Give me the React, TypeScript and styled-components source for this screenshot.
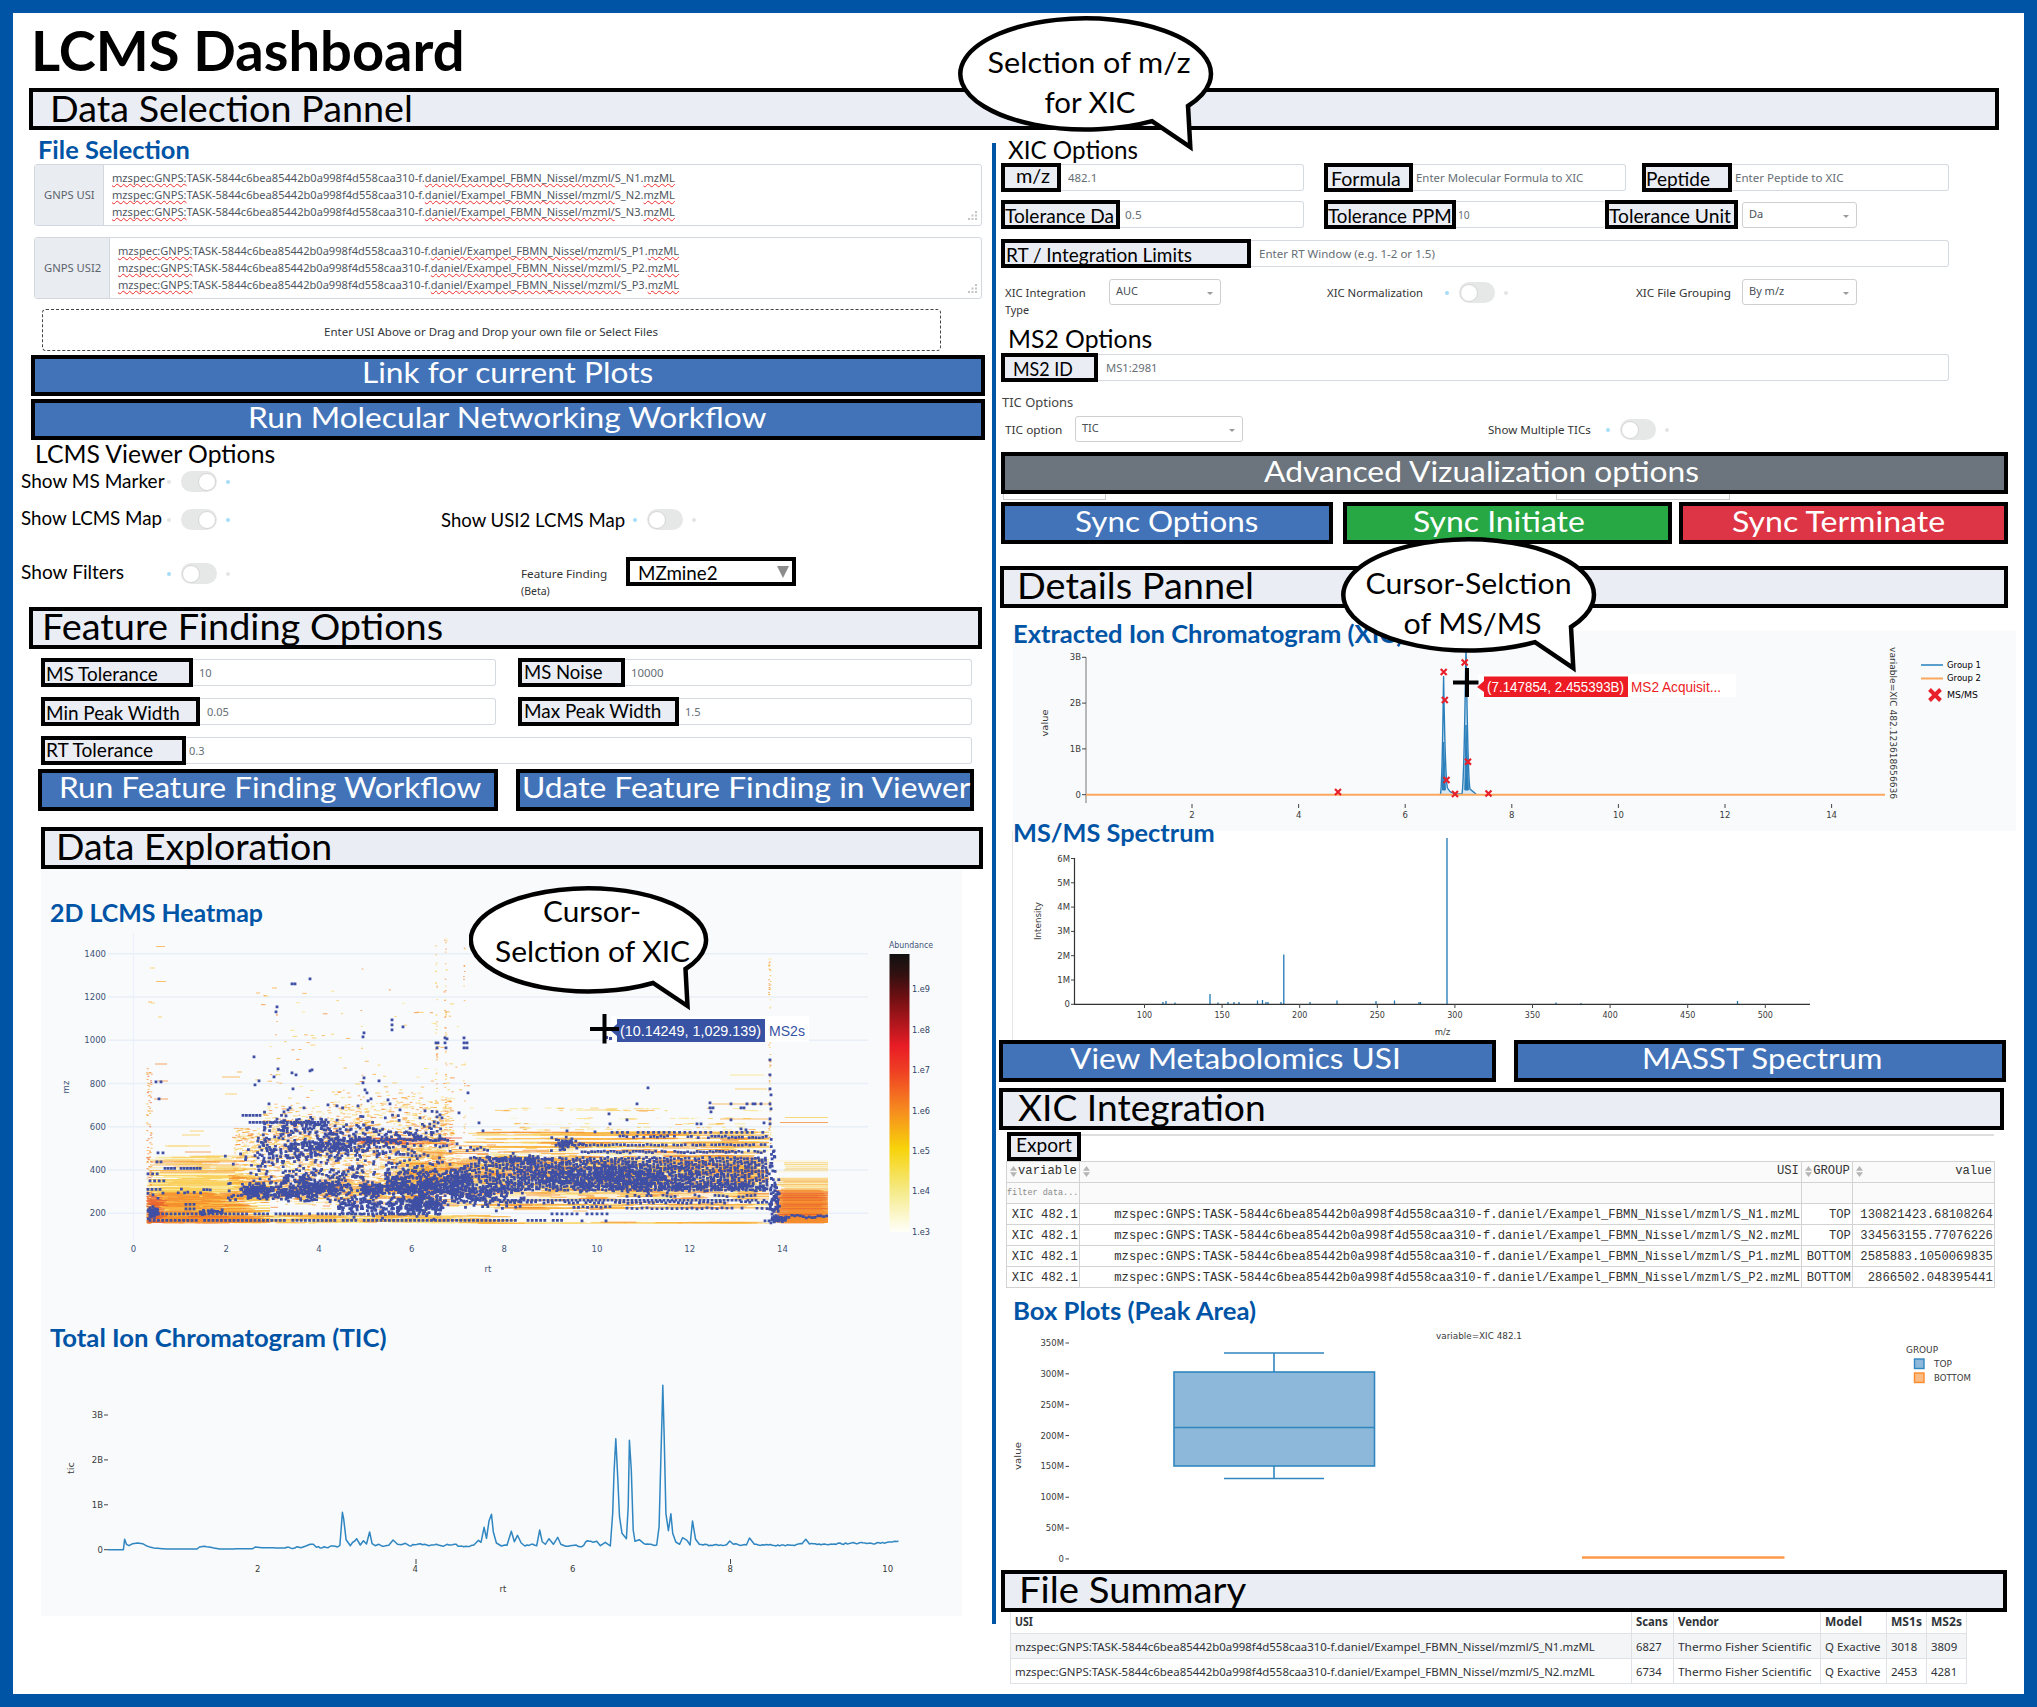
import React, { useLayoutEffect, useRef, useState } from 'react';
import styled, { createGlobalStyle, css } from 'styled-components';

const HUMAN = "Lato, 'Open Sans', sans-serif";
const UI = "'Noto Sans', 'Open Sans', sans-serif";
const PLOT = "'DejaVu Sans', 'Open Sans', sans-serif";
const BLUE = '#0054a6';
const BUTTON = '#4273b9';
const STEEL = '#1f77b4';

const Global = createGlobalStyle`
  *, *::before, *::after { box-sizing: border-box; }
  body { margin: 0; background: #fff; }
`;

/* ---------- layout ---------- */
const Frame = styled.div`
  position: relative;
  width: 2037px;
  height: 1707px;
  border: 13px solid ${BLUE};
  background: #fff;
  overflow: hidden;
  color: #000;
`;
const Body = styled.div`
  display: flex;
  align-items: flex-start;
`;
const Column = styled.div<{ $w: number }>`
  width: ${p => p.$w}px;
  flex: none;
`;
const Divider = styled.div`
  flex: none;
  width: 4px;
  height: 1481px;
  margin-top: 13px;
  background: ${BLUE};
`;
const Row = styled.div<{ $h: number }>`
  display: flex;
  align-items: flex-start;
  height: ${p => p.$h}px;
`;

/* ---------- text ---------- */
type Face = { $size: number; $bold?: boolean; $color?: string; $font?: string };
const Slot = styled.span<Face & { $w: number; $ml: number; $base: number }>`
  flex: none;
  display: block;
  width: ${p => p.$w}px;
  margin-left: ${p => p.$ml}px;
  margin-top: ${p => p.$base - 0.887 * p.$size}px;
  font: ${p => (p.$bold ? 700 : 400)} ${p => p.$size}px/1 ${p => p.$font || HUMAN};
  color: ${p => p.$color || 'inherit'};
  text-align: left;
  white-space: pre;
`;
const Glyphs = styled.span<{ $flush: boolean }>`
  display: inline-block;
  margin-left: ${p => (p.$flush ? '0' : '-0.055em')};
  transform-origin: 0 50%;
`;

type FitProps = {
  w: number; size: number; base: number; ml?: number; bold?: boolean;
  color?: string; font?: string; children: React.ReactNode;
};
/* Condenses or widens its text so that it fills the given width. */
function Fit({ w, size, base, ml = 0, bold, color, font, children }: FitProps) {
  const ref = useRef<HTMLSpanElement>(null);
  const [ratio, setRatio] = useState(1);
  useLayoutEffect(() => {
    const el = ref.current;
    if (el && el.offsetWidth) setRatio((w + size * 0.1) / el.offsetWidth);
  }, [w, size]);
  return (
    <Slot $w={w} $ml={ml} $base={base} $size={size} $bold={bold} $color={color} $font={font}>
      <Glyphs ref={ref} $flush={font === UI} style={{ transform: `scaleX(${ratio})` }}>{children}</Glyphs>
    </Slot>
  );
}

/* ---------- bars and buttons ---------- */
const Box = styled.div<{ $w: number; $ml?: number; $h?: number; $bg?: string }>`
  flex: none;
  display: flex;
  align-items: flex-start;
  width: ${p => p.$w}px;
  height: ${p => p.$h ?? 42}px;
  margin-left: ${p => p.$ml ?? 0}px;
  border: 4px solid #000;
  background: ${p => p.$bg || '#eaedf3'};
`;
const ActionBox = styled(Box)`
  color: #fff;
  padding: 0;
  cursor: pointer;
`;
type ActionProps = { w: number; ml: number; tx: number; tw: number; base?: number; h?: number; bg?: string; children: string };
const Action = ({ w, ml, tx, tw, base = 25, h = 42, bg = BUTTON, children }: ActionProps) => (
  <ActionBox as="button" $w={w} $ml={ml} $h={h} $bg={bg}>
    <Fit w={tw} ml={tx - 4} size={29.5} base={base}>{children}</Fit>
  </ActionBox>
);
const HeadBox = styled(Box)`
  font-weight: 400;
`;

/* ---------- form controls ---------- */
const Group = styled.div<{ $w: number; $ml: number }>`
  flex: none;
  display: flex;
  width: ${p => p.$w}px;
  height: 29px;
  margin-left: ${p => p.$ml}px;
`;
const Tag = styled.label<{ $w: number; $ml?: number }>`
  flex: none;
  display: flex;
  align-items: flex-start;
  width: ${p => p.$w}px;
  height: 29px;
  margin-left: ${p => p.$ml ?? 0}px;
  border: 4px solid #000;
  background: #eaedf3;
`;
const Field = styled.div<{ $open?: boolean }>`
  flex: 1;
  display: flex;
  align-items: center;
  height: 27px;
  margin-top: 1px;
  border: 1.5px solid #d5dae1;
  border-left: 0;
  border-right-width: ${p => (p.$open ? 0 : 1.5)}px;
  border-radius: 0 3px 3px 0;
`;
const inputFont = css`
  font: 11px/1 ${UI};
  color: #6c757d;
`;
const FieldText = styled.span`
  display: flex;
  height: 16px;
`;
type TaggedProps = {
  w: number; ml: number; tag: number; label: string; tx: number; tw: number; base?: number;
  value: string; vx: number; vw: number; open?: boolean;
};
const Tagged = (p: TaggedProps) => (
  <Group $w={p.w} $ml={p.ml}>
    <Tag $w={p.tag}><Fit w={p.tw} ml={p.tx - 4} size={18.8} base={(p.base ?? 22.5) - 2.9}>{p.label}</Fit></Tag>
    <Field $open={p.open}>
      <FieldText><Fit w={p.vw} ml={p.vx - p.tag} size={11} base={11.8} font={UI} color="#666e76">{p.value}</Fit></FieldText>
    </Field>
  </Group>
);
const SelectBox = styled.div<{ $w: number; $ml: number; $mt?: number; $h?: number }>`
  flex: none;
  display: flex;
  justify-content: space-between;
  align-items: center;
  width: ${p => p.$w}px;
  height: ${p => p.$h ?? 26}px;
  margin: ${p => p.$mt ?? 0}px 0 0 ${p => p.$ml}px;
  padding: 0 7px 3px 6px;
  border: 1.5px solid #cfcfcf;
  border-radius: 3px;
  ${inputFont}
  color: #495057;
`;
const Caret = styled.i`
  border: 3px solid transparent;
  border-top: 3px solid #999;
  border-bottom: 0;
  margin-top: 5px;
`;
const EngineSelect = styled.div`
  flex: none;
  display: flex;
  align-items: flex-start;
  width: 170px;
  height: 29px;
  margin: 1px 0 0 20px;
  border: 4px solid #000;
  background: #fff;
`;
const CaretSlot = styled.span`
  margin: 3px 0 0 60px;
`;
const ToggleRow = styled.div<{ $ml: number; $mt: number }>`
  flex: none;
  display: flex;
  align-items: center;
  justify-content: space-between;
  width: 63px;
  height: 21px;
  margin: ${p => p.$mt}px 0 0 ${p => p.$ml}px;
`;
const Dot = styled.i<{ $on: boolean }>`
  width: 4px;
  height: 4px;
  border-radius: 50%;
  background: ${p => (p.$on ? '#a5dcf7' : '#e3e4e4')};
`;
const Pill = styled.span<{ $on: boolean }>`
  display: flex;
  justify-content: ${p => (p.$on ? 'flex-end' : 'flex-start')};
  align-items: center;
  width: 36px;
  height: 21px;
  padding: 1px;
  border-radius: 11px;
  background: #e6e7e7;
  &::after {
    content: '';
    width: 18px;
    height: 18px;
    border-radius: 50%;
    background: #fff;
    border: 1px solid #d6d6d6;
  }
`;
const Toggle = ({ on = false, ml, mt }: { on?: boolean; ml: number; mt: number }) => (
  <ToggleRow $ml={ml} $mt={mt}><Dot $on={!on} /><Pill $on={on} /><Dot $on={on} /></ToggleRow>
);
const Stack = styled.div<{ $w: number; $ml: number }>`
  flex: none;
  width: ${p => p.$w}px;
  margin-left: ${p => p.$ml}px;
`;

/* ---------- USI inputs ---------- */
const UsiBox = styled.div`
  display: flex;
  flex: none;
  width: 948px;
  height: 62px;
  margin-left: 21px;
  border: 1.5px solid #d3d8e0;
  border-radius: 3px;
`;
const UsiTag = styled.div<{ $w: number }>`
  display: flex;
  align-items: flex-start;
  flex: none;
  width: ${p => p.$w}px;
  background: #e9ecf1;
  border-right: 1.5px solid #d3d8e0;
`;
const UsiLines = styled.div`
  flex: 1;
  padding-top: 5px;
`;
const UsiLine = styled.div`
  display: flex;
  height: 16.7px;
`;
const Wavy = styled.span`
  text-decoration: underline wavy #ee2a2a 1px;
  text-decoration-skip-ink: none;
  text-underline-offset: 1px;
`;
const Grip = styled.svg`
  align-self: flex-end;
  margin: 0 3px 4px 0;
`;
const UsiInput = ({ label, tag, lw, tw, lines }: { label: string; tag: number; lw: number; tw: number; lines: string[] }) => (
  <UsiBox>
    <UsiTag $w={tag}><Fit w={lw} ml={9} size={11.6} base={34.5} font={UI} color="#5b636b">{label}</Fit></UsiTag>
    <UsiLines>
      {lines.map(l => (
        <UsiLine key={l}>
          <Fit w={tw} ml={8} size={11.6} base={12.6} font={UI} color="#50575f">
            <Wavy>mzspec:GNPS:</Wavy>TASK-5844c6bea85442b0a998f4d558caa310-f.<Wavy>daniel/Exampel_FBMN_Nissel/mzml/</Wavy>{`${l}.`}<Wavy>mzML</Wavy>
          </Fit>
        </UsiLine>
      ))}
    </UsiLines>
    <Grip width="10" height="10" fill="#c4c4c4">
      <path d="M7 0h2v2h-2zM7 3.5h2v2h-2zM7 7h2v2h-2zM3.5 3.5h2v2h-2zM3.5 7h2v2h-2zM0 7h2v2h-2z" />
    </Grip>
  </UsiBox>
);
const DropZone = styled.div`
  display: flex;
  align-items: flex-start;
  width: 899px;
  height: 42px;
  margin-left: 29px;
  border: 1.5px dashed #444;
  border-radius: 4px;
`;
const Stub = styled.i<{ $w: number; $ml: number }>`
  width: ${p => p.$w}px;
  height: 6px;
  margin-left: ${p => p.$ml}px;
  border: 1px solid #ccc;
  border-top: 0;
`;

/* ---------- chart pieces ---------- */
const Panel = styled.section`
  width: 921px;
  height: 747px;
  margin-left: 28px;
  background: #f9fafc;
`;
const Chart = styled.svg`
  display: block;
  overflow: visible;
`;
const XicPanel = styled.section`
  width: 1003px;
  height: 223px;
  margin-left: 17px;
  background: linear-gradient(transparent 23px, #f9fafc 23px);
`;
const SpectrumPanel = styled.section`
  width: 1003px;
  height: 209px;
  margin-left: 16px;
  border-left: 1px solid #e4e4e4;
`;
const Heading = ({ w, ml, base, children }: { w: number; ml: number; base: number; children: string }) => (
  <Fit w={w} ml={ml} size={24.5} base={base + 1} bold color={BLUE}>{children}</Fit>
);

type TProps = {
  x: number; y: number; s?: number; a?: 'start' | 'middle' | 'end'; len?: number; fill?: string;
  font?: string; rot?: number; children: string;
};
const T = ({ x, y, s = 8.5, a = 'middle', len, fill = '#3a3a3a', font = PLOT, rot, children }: TProps) => (
  <text x={x} y={y + s * 0.36} fontSize={s} fontFamily={font} fill={fill} textAnchor={a}
    textLength={len} lengthAdjust="spacingAndGlyphs"
    transform={rot ? `rotate(${rot} ${x} ${y})` : undefined}>{children}</text>
);

/* ---------- heatmap data ---------- */
let seed = 20231;
const rnd = () => {
  seed = (seed * 1664525 + 1013904223) % 4294967296;
  return seed / 4294967296;
};
const gauss = () => rnd() + rnd() + rnd() + rnd() - 2;
const HEAT = ['#fcf3c8', '#f9e27c', '#f9c94c', '#f9a836', '#f58428', '#e8582e'];
const streaks: string[] = HEAT.map(() => '');
const streak = (x: number, y: number, w: number, c: number) => {
  const i = Math.max(0, Math.min(HEAT.length - 1, Math.round(c)));
  streaks[i] += `M${x.toFixed(1)} ${y.toFixed(1)}h${w.toFixed(1)}`;
};
let ms2 = '';
const mark = (x: number, y: number) => {
  ms2 += `M${(x - 1.4).toFixed(1)} ${(y - 1.4).toFixed(1)}h2.8v2.7h-2.8z`;
};
const markRow = (x0: number, x1: number, y: number, step: number, p = 1, j = 0) => {
  for (let x = x0; x < x1; x += step) if (rnd() < p) mark(x, y + (j ? (rnd() - 0.5) * j : 0));
};

/* low retention time: band that deepens toward low m/z */
for (let y = 1170; y < 1223; y += 1) {
  const d = (y - 1170) / 53;
  for (let i = 0; i < 3 + d * 6; i++) {
    const x = 147 + rnd() * rnd() * 110;
    const end = Math.min(270, x + 15 + rnd() * 70);
    streak(x, y + 0.5, end - x, d * 2.3 + rnd() * 2.4 - 0.7);
  }
}
for (let i = 0; i < 120; i++) {
  const y = 1193 + Math.abs(gauss()) * 25;
  if (y < 1223) streak(147 + rnd() * 80, y, 5 + rnd() * 26, 3.2 + rnd() * 1.2);
}
for (let i = 0; i < 60; i++) streak(146 + rnd() * 6, 1196 + rnd() * 27, 6 + rnd() * 12, 4.6);
for (let i = 0; i < 60; i++) streak(150 + rnd() * 90, 1216 + rnd() * 7, 12 + rnd() * 30, 3.6 + rnd());
for (let i = 0; i < 46; i++) streak(148 + rnd() * 85, 1156 + rnd() * 16, 12 + rnd() * 40, rnd() * 2.8);
[[155, 1161, 100, 3], [150, 1165, 110, 3], [150, 1170.5, 95, 3], [165, 1146, 45, 2], [185, 1152, 26, 4], [160, 1172, 75, 4], [150, 1162, 70, 4], [190, 1131, 14, 2], [182, 1135, 18, 2], [168, 1146, 20, 1], [222, 1077, 18, 3], [225, 1094, 12, 2], [155, 1064, 12, 4], [156, 946.5, 9, 3], [156, 981.5, 10, 3], [148, 1002, 4, 3], [151, 1003, 4, 2], [158, 1017, 4, 2], [150, 968, 5, 2], [158, 1081, 10, 4], [154, 1099, 14, 4], [148, 1111, 5, 3], [237, 1072, 5, 3], [256, 993, 4, 3], [272, 988, 5, 3]].forEach(a =>
  streak(a[0], a[1], a[2], a[3]));
for (let i = 0; i < 170; i++) {
  const y = 1223 - Math.pow(rnd(), 1.9) * 155;
  streak(146 + rnd() * 5, y, 2, 2.4 + rnd() * 2.6);
}
/* mid retention time: scattered grains */
for (let i = 0; i < 2100; i++) {
  const x = 232 + rnd() * 220;
  const y = 1146 + gauss() * 44;
  if (y > 1088 && y < 1190 && (x > 262 || y > 1128) && (x > 330 || y > 1108)) streak(x, y, 1.2 + rnd() * 4.5, 1 + rnd() * 3);
}
for (let i = 0; i < 750; i++) streak(228 + rnd() * 200, 1190 + gauss() * 12, 2 + rnd() * 12, 1 + rnd() * 3.2);
for (let i = 0; i < 230; i++) streak(228 + rnd() * 260, 1215 + rnd() * 8, 5 + rnd() * 34, rnd() * 3.2);
for (let i = 0; i < 60; i++) streak(355 + rnd() * 90, 1138 + rnd() * 6, 6 + rnd() * 14, 4 + rnd());
/* long streaks of the right half */
for (let i = 0; i < 1400; i++) {
  const x = 385 + rnd() * 365;
  const y = 1173 + gauss() * 26;
  if (y > 1138 && y < 1212) streak(x, y, Math.min(5 + rnd() * 34, 769 - x), rnd() * 4.2);
}
for (let i = 0; i < 230; i++) {
  const x = 465 + rnd() * 270;
  streak(x, [1132, 1134, 1138, 1142, 1146, 1204, 1207, 1222][i % 8] + rnd() * 1.4, Math.min(20 + rnd() * 60, 769 - x), 1 + rnd() * 2.6);
}
for (let i = 0; i < 110; i++) {
  const x = 490 + rnd() * 265;
  streak(x, [1108, 1110, 1118, 1123.5, 1127, 1129][i % 6] + rnd(), 2 + rnd() * 9, rnd() * 3);
}
[[712, 1104, 56, 3], [720, 1119, 48, 3], [730, 1075, 34, 1], [735, 1089, 32, 2], [785, 1117.5, 43, 2], [780, 1122.5, 48, 4], [585, 1110, 32, 2]].forEach(a => streak(a[0], a[1], a[2], a[3]));
for (let y = 1161; y < 1223; y += 0.9) {
  if (y < 1178 && rnd() < 0.55) continue;
  const x = 772 + rnd() * 14;
  streak(x, y, 828 - x, y > 1192 ? 2.6 + rnd() * 2 : rnd() * 3.4);
}
for (let i = 0; i < 130; i++) streak(774 + rnd() * 10, 1190 + rnd() * 33, 44, 3 + rnd() * 1.6);
[[436, 940, 50], [445, 935, 60], [464, 945, 22], [769, 957, 90], [361, 960, 12], [276, 948, 10]].forEach(([cx, top, n]) => {
  for (let i = 0; i < n; i++) streak(cx + rnd() * 2 - 1, top + rnd() * (1150 - top), 1.6, 1 + rnd() * 3.2);
});
for (let i = 0; i < 110; i++) streak(255 + rnd() * 215, 1108 - Math.pow(rnd(), 2) * 120, 2 + rnd() * 3, 1 + rnd() * 3);

/* MS2 markers */
for (let i = 0; i < 270; i++) { const x = 322 + gauss() * 58; mark(x, 1150 - (x - 290) * 0.09 + gauss() * 10); }
for (let i = 0; i < 190; i++) mark(262 + rnd() * 180, 1134 + gauss() * 18);
for (let i = 0; i < 150; i++) mark(250 + rnd() * 190, 1160 + gauss() * 26);
for (let i = 0; i < 60; i++) mark(280 + rnd() * 50, 1126 + gauss() * 7);
for (let i = 0; i < 150; i++) { const x = 228 + rnd() * 150; mark(x, 1190 + Math.sin(x / 11) * 3 + gauss() * 8); }
for (let i = 0; i < 90; i++) mark(257 + gauss() * 14, 1191 + gauss() * 6);
for (let i = 0; i < 210; i++) mark(308 + gauss() * 34, 1190 + gauss() * 9);
for (let i = 0; i < 80; i++) mark(285 + rnd() * 80, 1177 + gauss() * 9);
for (let i = 0; i < 260; i++) mark(362 + rnd() * 95, 1189 + gauss() * 6);
for (let i = 0; i < 220; i++) mark(338 + rnd() * 105, 1206 + gauss() * 8);
for (let i = 0; i < 240; i++) mark(385 + rnd() * 85, 1179 + gauss() * 11);
for (let i = 0; i < 110; i++) mark(420 + gauss() * 18, 1203 + gauss() * 9);
markRow(250, 330, 1122.5, 3.4);
markRow(243, 262, 1115.5, 3.4);
markRow(352, 448, 1140, 2.9, 0.95, 2.4);
markRow(440, 490, 1148, 3.4, 0.85, 9);
markRow(396, 430, 1155, 4, 0.9, 2);
markRow(165, 202, 1168.5, 3.2, 0.95);
markRow(148, 164, 1189.5, 4);
markRow(175, 212, 1191, 3.2, 0.85, 4);
markRow(186, 198, 1204.5, 4); markRow(186, 198, 1209, 4);
markRow(148, 163, 1174, 4.6, 0.9); markRow(150, 166, 1181, 4.6, 0.9); markRow(148, 166, 1197, 5, 1, 8);
markRow(150, 440, 1214, 4.2, 0.95);
markRow(150, 564, 1220.4, 4.2, 0.94);
for (let i = 0; i < 45; i++) mark(148 + rnd() * 10, 1213 + gauss() * 5);
for (let i = 0; i < 20; i++) mark(200 + rnd() * 25, 1212 + gauss() * 3);
for (let x = 450; x < 767; x += 3.5) {
  const t = (x - 450) / 317;
  const top = 1158 + Math.max(0, 12 - t * 90);
  const bottom = 1198 - Math.min(6, t * 30);
  for (let y = top; y < bottom; y += 3.1) {
    if (rnd() < 0.72 + Math.min(0.2, t * 0.8)) mark(x + rnd() * 1.2 + (y - top) * 0.05, y + rnd() * 1.2 + Math.sin(x) * 0.8);
  }
}
for (let i = 0; i < 520; i++) {
  const x = 610 + gauss() * 90;
  if (x < 768) mark(x, 1176 + gauss() * 11);
}
for (let i = 0; i < 160; i++) mark(580 + rnd() * 187, 1187 + gauss() * 4);
for (let i = 0; i < 180; i++) mark(486 + gauss() * 34, 1192 + gauss() * 13);
for (let i = 0; i < 70; i++) mark(510 + gauss() * 30, 1159 + gauss() * 4);
markRow(612, 768, 1132.5, 5.2, 0.85); markRow(620, 768, 1137, 3.4, 0.75, 2);
markRow(556, 768, 1145, 3.8, 0.9, 1); markRow(582, 768, 1152, 3.2, 0.9, 2);
markRow(500, 768, 1200.3, 4, 0.95); markRow(502, 768, 1202.5, 4.2, 0.85, 2);
markRow(627, 768, 1208.5, 5, 0.9, 1); markRow(627, 768, 1196, 4, 0.6, 2);
markRow(574, 612, 1207, 4.5, 0.9, 1);
markRow(552, 612, 1214, 5, 0.85);
for (let i = 0; i < 40; i++) mark(565 + gauss() * 14, 1145 + gauss() * 6);
for (let i = 0; i < 60; i++) mark(775 + gauss() * 4, 1203 + gauss() * 16);
for (let i = 0; i < 24; i++) mark(772 + gauss() * 3, 1165 + gauss() * 26);
for (let i = 0; i < 40; i++) mark(774 + rnd() * 12, 1217 + rnd() * 5);
markRow(786, 829, 1216.5, 2.9, 0.98, 3);
[[156, 1082], [161, 1082], [159, 1099], [254, 1057], [255, 1085], [259, 1081], [274, 1077], [278, 1069], [276, 1012], [277, 1007], [292, 984], [295, 984], [310, 979], [292, 1073], [296, 1075], [293, 1089], [310, 1071], [312, 1070], [364, 1033], [363, 1037], [392, 1020], [392, 1025], [392, 1030], [403, 1027], [364, 1078], [363, 1083], [365, 1090], [367, 1093], [379, 1081], [269, 1104], [328, 1105], [337, 1106], [358, 1106], [371, 1099], [368, 1101], [388, 1100], [390, 1104], [436, 1043], [438, 1043], [437, 1048], [445, 1038], [447, 1039], [445, 1043], [446, 1048], [464, 1038], [464, 1043], [467, 1043], [464, 1048], [467, 1048], [468, 1093], [437, 1112], [437, 1117], [440, 1115], [442, 1118], [438, 1123], [425, 1111], [459, 1113], [479, 1123], [483, 1131], [158, 1153], [163, 1153], [157, 1162], [161, 1162], [648, 1088], [637, 1104], [609, 1114], [610, 1124], [627, 1120], [567, 1131], [595, 1132], [710, 1103], [710, 1108], [713, 1108], [711, 1112], [731, 1104], [747, 1104], [753, 1104], [755, 1104], [761, 1104], [741, 1108], [744, 1108], [731, 1120], [697, 1124], [701, 1124], [764, 1123], [741, 1129], [746, 1130], [770, 1060], [770, 1075], [770, 1089], [771, 1095], [770, 1104], [771, 1109], [770, 1119], [770, 1124], [582, 1221], [606, 1221], [765, 1221], [769, 1221], [284, 1112], [288, 1110], [290, 1108], [286, 1116], [304, 1108], [400, 1110], [420, 1118]].forEach(([x, y]) => mark(x, y));

const Heatmap = () => (
  <Chart width="921" height="371" viewBox="41 929 921 371">
    <defs>
      <linearGradient id="heat" x1="0" y1="0" x2="0" y2="1">
        <stop offset="0" stopColor="#111" /><stop offset="0.07" stopColor="#301010" />
        <stop offset="0.15" stopColor="#6b0f12" /><stop offset="0.33" stopColor="#e81c25" />
        <stop offset="0.42" stopColor="#ef3f23" /><stop offset="0.56" stopColor="#f68a1f" />
        <stop offset="0.7" stopColor="#f7d30a" /><stop offset="0.85" stopColor="#f5ea86" />
        <stop offset="1" stopColor="#fffffa" />
      </linearGradient>
      <linearGradient id="glow" x1="0" y1="0" x2="0" y2="1">
        <stop offset="0" stopColor="#fdf6d8" /><stop offset="1" stopColor="#f8b24a" />
      </linearGradient>
    </defs>
    {[1400, 1200, 1000, 800, 600, 400, 200].map((v, i) => (
      <g key={v}>
        <path d={`M108 ${953.7 + i * 43.25}H868`} stroke="#e8eff8" strokeWidth="1.6" />
        <T x={106} y={953.7 + i * 43.25} a="end" fill="#3d5275">{String(v)}</T>
      </g>
    ))}
    <path d="M133.5 933V1241" stroke="#eaf1fa" strokeWidth="1.2" />
    <rect x="147" y="1180" width="75" height="42" fill="url(#glow)" opacity="0.7" />
    <rect x="460" y="1160" width="309" height="38" fill="#fdf0dc" />
    <rect x="788" y="1192" width="40" height="31" fill="url(#glow)" />
    {streaks.map((d, i) => <path key={HEAT[i]} d={d} stroke={HEAT[i]} strokeWidth="0.9" opacity="0.8" />)}
    <path d={ms2} fill="#3f4fa3" />
    {[0, 2, 4, 6, 8, 10, 12, 14].map(v => (
      <T key={v} x={133.5 + v * 46.35} y={1249} fill="#3d5275">{String(v)}</T>
    ))}
    <T x={488} y={1268.5} fill="#3d5275">rt</T>
    <T x={66} y={1087} rot={-90} fill="#3d5275">mz</T>
    <T x={889} y={945.5} a="start" s={8} len={44} fill="#3d5275">Abundance</T>
    <rect x="889.5" y="954" width="20" height="278" fill="url(#heat)" />
    {['1.e9', '1.e8', '1.e7', '1.e6', '1.e5', '1.e4', '1.e3'].map((l, i) => (
      <T key={l} x={912} y={989.5 + i * 40.4} a="start" s={8} len={18} fill="#2f4266">{l}</T>
    ))}
    <rect x="611" y="1016" width="198" height="26" fill="#fff" />
    <path d="M609 1037h3v3h-3zM605 1036h3v3h-3z" fill="#3c4da3" />
    <path d="M610 1030L617 1024V1019H765V1042H617V1036Z" fill="#3953a4" />
    <T x={620} y={1030.5} a="start" s={15.5} len={141} fill="#fff" font="'Liberation Sans', sans-serif">(10.14249, 1,029.139)</T>
    <T x={769} y={1030.5} a="start" s={15.5} len={36} fill="#3953a4" font="'Liberation Sans', sans-serif">MS2s</T>
    <path d="M590 1029H619M604.5 1014V1043.5" stroke="#000" strokeWidth="4" />
  </Chart>
);

/* ---------- total ion chromatogram ---------- */
const TIC: number[][] = [[126, 749], [151, 749], [153, 718], [156, 733], [160, 737], [166, 731], [174, 729], [182, 731], [190, 739], [200, 744], [220, 747], [270, 747], [274, 741], [282, 739], [292, 742], [306, 747], [360, 746], [364, 741], [375, 743], [412, 744], [428, 744], [432, 740], [438, 743], [446, 738], [453, 733], [458, 733], [463, 742], [482, 743], [486, 738], [497, 741], [501, 736], [505, 637], [507, 655], [511, 719], [518, 737], [528, 716], [534, 735], [539, 722], [544, 732], [549, 696], [553, 731], [558, 737], [564, 733], [570, 739], [580, 736], [587, 720], [594, 733], [600, 734], [607, 730], [613, 737], [631, 731], [645, 737], [660, 735], [668, 739], [674, 733], [686, 733], [695, 739], [717, 736], [725, 721], [729, 727], [734, 682], [738, 715], [742, 663], [746, 643], [749, 695], [754, 729], [762, 738], [771, 736], [778, 694], [783, 725], [788, 706], [794, 729], [800, 738], [810, 733], [819, 737], [824, 690], [828, 725], [833, 733], [839, 716], [846, 733], [853, 712], [858, 733], [866, 739], [880, 736], [892, 740], [901, 722], [910, 727], [916, 724], [922, 737], [930, 727], [938, 738], [942, 640], [944, 520], [947, 416], [950, 530], [953, 650], [957, 700], [964, 716], [967, 620], [969, 421], [972, 510], [975, 690], [978, 724], [985, 719], [992, 730], [1013, 735], [1017, 680], [1020, 460], [1022, 330], [1023, 256], [1025, 400], [1028, 640], [1032, 692], [1036, 641], [1039, 700], [1044, 726], [1050, 733], [1055, 713], [1062, 721], [1067, 735], [1071, 663], [1076, 718], [1082, 733], [1100, 736], [1126, 734], [1131, 723], [1137, 733], [1158, 735], [1163, 714], [1171, 733], [1200, 736], [1230, 736], [1248, 731], [1254, 718], [1260, 732], [1300, 732], [1340, 729], [1375, 730], [1388, 726], [1404, 724]];
const ticPath = TIC.flatMap((p, i) => {
  const q = TIC[i + 1];
  if (!q || q[0] - p[0] < 9) return [p];
  const n = Math.floor((q[0] - p[0]) / 3);
  return Array.from({ length: n }, (_, k) => [p[0] + ((q[0] - p[0]) * k) / n, p[1] + ((q[1] - p[1]) * k) / n + (p[0] > 400 && k ? (rnd() - 0.5) * 5 : 0)]);
}).map((p, i) => `${i ? 'L' : 'M'}${(30 + p[0] / 1.6165).toFixed(1)} ${(1300 + p[1] / 3).toFixed(1)}`).join('');

const TicChart = () => (
  <Chart width="921" height="256" viewBox="41 1360 921 256">
    {['3B', '2B', '1B', '0'].map((l, i) => (
      <g key={l}>
        <T x={103} y={1415 + i * 44.9} a="end">{l}</T>
        <path d={`M104 ${1415 + i * 44.9}h4`} stroke="#444" />
      </g>
    ))}
    <T x={70.5} y={1468} rot={-90} len={12}>tic</T>
    {[2, 4, 6, 8, 10].map((v, i) => <T key={v} x={257.7 + i * 157.5} y={1569}>{String(v)}</T>)}
    <path d="M416 1559v5M730.5 1559v5" stroke="#444" />
    <T x={503} y={1589}>rt</T>
    <path d={ticPath} fill="none" stroke="#2f86c0" strokeWidth="1.5" strokeLinejoin="round" />
  </Chart>
);

/* ---------- extracted ion chromatogram ---------- */
const Cross = ({ x, y, r = 3 }: { x: number; y: number; r?: number }) => (
  <path d={`M${x - r} ${y - r}l${2 * r} ${2 * r}M${x + r} ${y - r}l${-2 * r} ${2 * r}`} stroke="#e8202a" strokeWidth={r * 0.72} />
);
const XicChart = () => (
  <Chart width="1003" height="187" viewBox="1013 644 1003 187">
    <path d="M1086 657V803" stroke="#777" />
    {['3B', '2B', '1B', '0'].map((l, i) => (
      <g key={l}>
        <T x={1081} y={657.3 + i * 45.8} a="end">{l}</T>
        <path d={`M1082 ${657.3 + i * 45.8}h4`} stroke="#444" />
      </g>
    ))}
    <T x={1045} y={723} rot={-90} len={27}>value</T>
    {[2, 4, 6, 8, 10, 12, 14].map((v, i) => (
      <g key={v}>
        <path d={`M${1192 + i * 106.6} 804v4`} stroke="#444" />
        <T x={1192 + i * 106.6} y={815}>{String(v)}</T>
      </g>
    ))}
    <path d="M1440.5 794C1442.3 785 1442.6 740 1443.6 676C1444.6 740 1445.2 780 1447.5 788C1450 793 1453 794 1462 794C1464.3 780 1464.6 720 1466 648C1467.4 720 1467.8 780 1470 789L1476 794" fill="#d8e8f4" stroke="#2a7fba" strokeWidth="1.4" />
    <path d="M1442.4 790L1443.6 742L1445.4 790ZM1464.8 790L1466 725L1468.4 790Z" fill="#2a7fba" stroke="#2a7fba" />
    <path d="M1086 794.7H1885" stroke="#fba85e" strokeWidth="2" />
    {[[1443.7, 672], [1444.8, 700], [1464.7, 662.6], [1468, 761.7], [1446.5, 780], [1455, 794], [1488.5, 793.5], [1338, 792]].map(([x, y]) => (
      <Cross key={`${x}`} x={x} y={y} />
    ))}
    <rect x="1478" y="674" width="258" height="23" fill="#fff" />
    <path d="M1477 687L1484 681V676.5H1628V697H1484V692Z" fill="#ed1c24" />
    <T x={1487} y={687} a="start" s={14} len={137} fill="#fff" font="'Liberation Sans', sans-serif">(7.147854, 2.455393B)</T>
    <T x={1631} y={687} a="start" s={14} len={90} fill="#ed1c24" font="'Liberation Sans', sans-serif">MS2 Acquisit...</T>
    <path d="M1453 682.5H1478.5M1467 668V697" stroke="#000" strokeWidth="4" />
    <T x={1893} y={723} rot={90} len={152}>variable=XIC 482.123618656636</T>
    <path d="M1921 665h22" stroke="#5a9ecb" strokeWidth="2" />
    <path d="M1921 678.5h22" stroke="#fba85e" strokeWidth="2" />
    <Cross x={1935} y={695} r={5.5} />
    <T x={1947} y={664.5} a="start" len={34} fill="#000">Group 1</T>
    <T x={1947} y={678} a="start" len={34} fill="#000">Group 2</T>
    <T x={1947} y={695} a="start" len={31} fill="#000">MS/MS</T>
  </Chart>
);

/* ---------- MS/MS spectrum ---------- */
const STICKS = [[1447, 838], [1283.8, 954.5], [1210, 994], [1166, 1001], [1257.5, 1000.5], [1262.5, 1000], [1266, 1002], [1281, 1002], [1310, 1002], [1337, 1000.5], [1376, 1001], [1394.5, 1000.5], [1419, 1002], [1420.5, 1002], [1556, 1002.5], [1737.5, 1001], [1228, 1002], [1234, 1002], [1239, 1002], [1218, 1002.5], [1581, 1003], [1268, 1002], [1163, 1002], [1175, 1002.5]];
const Spectrum = () => (
  <Chart width="1002" height="202" viewBox="1013 838 1002 202">
    {STICKS.map(([x, y]) => <path key={x} d={`M${x} ${y}V1004`} stroke={STEEL} strokeWidth="1.3" />)}
    <path d="M1074.5 858V1004.3H1810" fill="none" stroke="#333" strokeWidth="1.2" />
    {['6M', '5M', '4M', '3M', '2M', '1M', '0'].map((l, i) => (
      <g key={l}>
        <T x={1070} y={858.5 + i * 24.3} a="end">{l}</T>
        <path d={`M1071 ${858.5 + i * 24.3}h3`} stroke="#444" />
      </g>
    ))}
    {[100, 150, 200, 250, 300, 350, 400, 450, 500].map((v, i) => (
      <g key={v}>
        <path d={`M${1144.5 + i * 77.6} 1004v4`} stroke="#444" />
        <T x={1144.5 + i * 77.6} y={1014.7} s={8}>{String(v)}</T>
      </g>
    ))}
    <T x={1442.5} y={1031.5}>m/z</T>
    <T x={1037.5} y={921} rot={-90} len={38}>Intensity</T>
  </Chart>
);

/* ---------- box plot ---------- */
const BoxPlot = () => (
  <Chart width="1028" height="242" viewBox="996 1328 1028 242">
    <T x={1479} y={1335.5} len={86}>variable=XIC 482.1</T>
    {['350M', '300M', '250M', '200M', '150M', '100M', '50M', '0'].map((l, i) => (
      <g key={l}>
        <T x={1064} y={1343 + i * 30.85} a="end">{l}</T>
        <path d={`M1065.5 ${1343 + i * 30.85}h3.5`} stroke="#444" />
      </g>
    ))}
    <T x={1017.5} y={1456} rot={-90} len={28}>value</T>
    <g stroke="#3186c0" strokeWidth="1.6" fill="none">
      <rect x="1174" y="1372" width="200.5" height="94" fill="#8db8da" />
      <path d="M1174 1427.5H1374.5M1224 1353H1324M1224 1478.5H1324M1274 1353V1372M1274 1466V1478.5" />
    </g>
    <path d="M1582 1557.5H1784.5" stroke="#fd9a4a" strokeWidth="2.4" />
    <T x={1906} y={1350} a="start" len={32}>GROUP</T>
    <rect x="1914.5" y="1359" width="9.5" height="9.5" fill="#8db8da" stroke="#3186c0" strokeWidth="1.4" />
    <rect x="1914.5" y="1373" width="9.5" height="9.5" fill="#fdbb84" stroke="#fd8a2a" strokeWidth="1.4" />
    <T x={1934} y={1364} a="start" len={18}>TOP</T>
    <T x={1934} y={1378.3} a="start" len={37}>BOTTOM</T>
  </Chart>
);

/* ---------- tables ---------- */
const DataGrid = styled.div`
  display: grid;
  grid-template-columns: 74px 722px 51px 142px;
  grid-auto-rows: 21px;
  width: 989px;
  height: 127px;
  margin-left: 10px;
  border-top: 1px solid #d3d3d3;
`;
const Cell = styled.div<{ $head?: boolean; $tight?: boolean }>`
  display: flex;
  align-items: center;
  justify-content: space-between;
  padding: ${p => (p.$tight ? '1px 0 0 0' : p.$head ? '0 2px 2px 3px' : '2px 1px 0 1px')};
  border-right: 1px solid #d3d3d3;
  border-bottom: 1.5px solid #d3d3d3;
  background: ${p => (p.$head ? '#fafafa' : '#fff')};
  font: 12.2px/1 'Liberation Mono', monospace;
  color: #333;
  white-space: nowrap;
  &:nth-child(4n + 1) { border-left: 1px solid #d3d3d3; }
`;
const Hint = styled.span`
  font-size: 8.5px;
  color: #8a8a8a;
`;
const Right = styled.span`
  margin-left: auto;
  letter-spacing: 0.06px;
`;
const Sorter = () => (
  <svg width="7" height="11" fill="#b5b5b5"><path d="M0 4.8L3.5 0L7 4.8ZM0 6.2L3.5 11L7 6.2Z" /></svg>
);
const USI = (s: string) => `mzspec:GNPS:TASK-5844c6bea85442b0a998f4d558caa310-f.daniel/Exampel_FBMN_Nissel/mzml/${s}.mzML`;
const XIC_ROWS = [
  ['S_N1', 'TOP', '130821423.68108264'],
  ['S_N2', 'TOP', '334563155.77076226'],
  ['S_P1', 'BOTTOM', '2585883.1050069835'],
  ['S_P2', 'BOTTOM', '2866502.048395441'],
];
const Rule = styled.div`
  flex: 1;
  height: 2px;
  margin: 2px 30px 0 0;
  background: #dedede;
`;

const Summary = styled.div`
  display: grid;
  grid-template-columns: 622px 42px 146.5px 66px 40.5px 40px;
  grid-template-rows: 22px 25px 25px;
  width: 957px;
  margin-left: 14px;
`;
const SCell = styled.div<{ $odd?: boolean }>`
  display: flex;
  align-items: flex-start;
  border-right: 1px solid #dee2e6;
  border-bottom: 1.5px solid #dee2e6;
  background: ${p => (p.$odd ? '#f4f5f6' : '#fff')};
  &:nth-child(6n + 1) { border-left: 1px solid #dee2e6; }
`;
const SUMMARY: [string, number][][] = [
  [['USI', 17], ['Scans', 31], ['Vendor', 40], ['Model', 36], ['MS1s', 30], ['MS2s', 30]],
  [[USI('S_N1'), 579], ['6827', 25], ['Thermo Fisher Scientific', 132], ['Q Exactive', 54], ['3018', 25.5], ['3809', 25.5]],
  [[USI('S_N2'), 579], ['6734', 25], ['Thermo Fisher Scientific', 132], ['Q Exactive', 54], ['2453', 25.5], ['4281', 25.5]],
];

/* ---------- speech bubbles ---------- */
const BubbleSvg = styled.svg<{ $x: number; $y: number }>`
  position: absolute;
  left: ${p => p.$x - 13}px;
  top: ${p => p.$y - 13}px;
`;
type BubbleLine = { x: number; y: number; w: number; text: string };
const Bubble = ({ x, y, wide, lines }: { x: number; y: number; wide: boolean; lines: BubbleLine[] }) => (
  <BubbleSvg $x={x} $y={y} width="260" height="144">
    <path
      d={wide
        ? 'M194 105.1A125.3 55.6 0 1 1 230 90L232.3 131Z'
        : 'M184 98A117.6 51.6 0 1 1 216.5 84L218.5 121Z'}
      fill="#fff" stroke="#000" strokeWidth="4.5" strokeMiterlimit="12" />
    {lines.map(l => (
      <text key={l.text} x={l.x} y={l.y} fontFamily={HUMAN} fontSize="28.5" textLength={l.w} lengthAdjust="spacingAndGlyphs">{l.text}</text>
    ))}
  </BubbleSvg>
);

export default function App() {
  return (
    <>
      <Global />
      <Frame>
        <Row $h={75}><Fit w={428} ml={21} size={54.5} base={58} bold>LCMS Dashboard</Fit></Row>
        <Row $h={42}>
          <HeadBox $w={1970} $ml={16}><Fit w={359} ml={19} size={36} base={30}>Data Selection Pannel</Fit></HeadBox>
        </Row>
        <Body>
          <Column $w={979}>
            <Row $h={34}><Heading w={149} ml={26} base={29}>File Selection</Heading></Row>
            <Row $h={73}><UsiInput label="GNPS USI" tag={69} lw={49} tw={562} lines={['S_N1', 'S_N2', 'S_N3']} /></Row>
            <Row $h={72}><UsiInput label="GNPS USI2" tag={75} lw={56} tw={560} lines={['S_P1', 'S_P2', 'S_P3']} /></Row>
            <Row $h={46}>
              <DropZone><Fit w={333} ml={281} size={11.4} base={26} font={UI} color="#33363b">Enter USI Above or Drag and Drop your own file or Select Files</Fit></DropZone>
            </Row>
            <Row $h={44}><Action w={954} ml={18} h={41} tx={332.5} tw={288} base={24.5}>Link for current Plots</Action></Row>
            <Row $h={41}><Action w={954} ml={18} h={41} tx={218.5} tw={515}>Run Molecular Networking Workflow</Action></Row>
            <Row $h={30}><Fit w={238} ml={23.5} size={24.5} base={23.3}>LCMS Viewer Options</Fit></Row>
            <Row $h={38}>
              <Fit w={142} ml={9} size={18.8} base={18.7}>Show MS Marker</Fit>
              <Toggle on ml={3} mt={1} />
            </Row>
            <Row $h={48}>
              <Fit w={139} ml={9} size={18.8} base={18}>Show LCMS Map</Fit>
              <Toggle on ml={6} mt={1} />
              <Fit w={182} ml={212.5} size={18.8} base={19.6}>Show USI2 LCMS Map</Fit>
              <Toggle ml={8.5} mt={1} />
            </Row>
            <Row $h={51}>
              <Fit w={101} ml={9} size={18.8} base={23.5}>Show Filters</Fit>
              <Toggle ml={44} mt={7} />
              <Stack $w={85} $ml={291}>
                <Row $h={17}><Fit w={85} size={11.2} base={22} font={UI} color="#333">Feature Finding</Fit></Row>
                <Row $h={17}><Fit w={28} size={11.2} base={22} font={UI} color="#333">(Beta)</Fit></Row>
              </Stack>
              <EngineSelect>
                <Fit w={78} ml={9} size={18.8} base={19.5}>MZmine2</Fit>
                <CaretSlot><svg width="12" height="12"><path d="M0 0H12L6 12Z" fill="#8c8c8c" /></svg></CaretSlot>
              </EngineSelect>
            </Row>
            <Row $h={51}><HeadBox $w={953} $ml={16}><Fit w={398} ml={11} size={36} base={29}>Feature Finding Options</Fit></HeadBox></Row>
            <Row $h={39}>
              <Tagged w={455} ml={28} tag={152} label="MS Tolerance" tx={6} tw={110} value="10" vx={158} vw={12} />
              <Tagged w={454} ml={22} tag={107} label="MS Noise" tx={7} tw={77} base={20.5} value="10000" vx={113} vw={31} />
            </Row>
            <Row $h={39}>
              <Tagged w={455} ml={28} tag={159} label="Min Peak Width" tx={6} tw={132} value="0.05" vx={166} vw={21} />
              <Tagged w={454} ml={22} tag={161} label="Max Peak Width" tx={7} tw={135} base={21} value="1.5" vx={167} vw={15} />
            </Row>
            <Row $h={33}>
              <Tagged w={931} ml={28} tag={145} label="RT Tolerance" tx={6} tw={105} base={21} value="0.3" vx={148} vw={15} />
            </Row>
            <Row $h={58}>
              <Action w={460} ml={25} tx={23} tw={419}>Run Feature Finding Workflow</Action>
              <Action w={458} ml={18} tx={7.5} tw={445}>Udate Feature Finding in Viewer</Action>
            </Row>
            <Row $h={42}><HeadBox $w={942} $ml={28}><Fit w={273} ml={13} size={36} base={28.5}>Data Exploration</Fit></HeadBox></Row>
            <Panel>
              <Row $h={60}><Heading w={210} ml={10} base={52.5}>2D LCMS Heatmap</Heading></Row>
              <Heatmap />
              <Row $h={60}><Heading w={334} ml={10} base={46.7}>Total Ion Chromatogram (TIC)</Heading></Row>
              <TicChart />
            </Panel>
          </Column>
          <Divider />
          <Column $w={1028}>
            <Row $h={33}><Fit w={128} ml={13.5} size={24.5} base={29.3}>XIC Options</Fit></Row>
            <Row $h={37}>
              <Tagged w={303} ml={5} tag={60} label="m/z" tx={16} tw={32} base={19.5} value="482.1" vx={67} vw={28} />
              <Tagged w={302} ml={20} tag={89} label="Formula" tx={8} tw={68} value="Enter Molecular Formula to XIC" vx={92} vw={166} />
              <Tagged w={307} ml={16} tag={90} label="Peptide" tx={5.5} tw={62} value="Enter Peptide to XIC" vx={93} vw={107} />
            </Row>
            <Row $h={39}>
              <Tagged w={303} ml={5} tag={119} label="Tolerance Da" tx={5} tw={107} value="0.5" vx={124} vw={16} />
              <Tagged w={281} ml={20} tag={132} label="Tolerance PPM" tx={5} tw={122} value="10" vx={134} vw={11} open />
              <Tag $w={133}><Fit w={120} ml={1} size={18.8} base={19.6}>Tolerance Unit</Fit></Tag>
              <SelectBox $w={115} $ml={4} $mt={2}>Da<Caret /></SelectBox>
            </Row>
            <Row $h={40}>
              <Tagged w={948} ml={5} tag={250} label="RT / Integration Limits" tx={6} tw={184} base={23} value="Enter RT Window (e.g. 1-2 or 1.5)" vx={258} vw={175} />
            </Row>
            <Row $h={42}>
              <Stack $w={80} $ml={9}>
                <Row $h={17}><Fit w={80} size={11.2} base={18} font={UI} color="#333">XIC Integration</Fit></Row>
                <Row $h={17}><Fit w={23} size={11.2} base={18} font={UI} color="#333">Type</Fit></Row>
              </Stack>
              <SelectBox $w={112} $ml={24}>AUC<Caret /></SelectBox>
              <Fit w={95} ml={106} size={11.2} base={18} font={UI} color="#333">XIC Normalization</Fit>
              <Toggle ml={23} mt={3} />
              <Fit w={94} ml={128} size={11.2} base={18} font={UI} color="#333">XIC File Grouping</Fit>
              <SelectBox $w={115} $ml={12}>By m/z<Caret /></SelectBox>
            </Row>
            <Row $h={32}><Fit w={142} ml={13.5} size={24.5} base={27.3}>MS2 Options</Fit></Row>
            <Row $h={40}>
              <Tagged w={948} ml={5} tag={97} label="MS2 ID" tx={13.5} tw={58} base={23} value="MS1:2981" vx={105} vw={50} />
            </Row>
            <Row $h={23}><Fit w={70} ml={6} size={12} base={14.5} font={UI} color="#444">TIC Options</Fit></Row>
            <Row $h={36}>
              <Fit w={56} ml={9} size={11.2} base={17.5} font={UI} color="#333">TIC option</Fit>
              <SelectBox $w={168} $ml={14}>TIC<Caret /></SelectBox>
              <Fit w={102} ml={245} size={11.2} base={17.5} font={UI} color="#333">Show Multiple TICs</Fit>
              <Toggle ml={16} mt={3} />
            </Row>
            <Row $h={42}><Action w={1007} ml={5} tx={265} tw={432} bg="#6c757d" base={25.7}>Advanced Vizualization options</Action></Row>
            <Row $h={8}><Stub $w={103} $ml={7} /><Stub $w={174} $ml={450} /></Row>
            <Row $h={64}>
              <Action w={332} ml={5} tx={76} tw={180} base={25.7}>Sync Options</Action>
              <Action w={329} ml={10} tx={72} tw={169} bg="#28a745" base={25.7}>Sync Initiate</Action>
              <Action w={329} ml={7} tx={55} tw={210} bg="#dd3545" base={25.7}>Sync Terminate</Action>
            </Row>
            <Row $h={42}><HeadBox $w={1008} $ml={4}><Fit w={233} ml={14.5} size={36} base={28.7}>Details Pannel</Fit></HeadBox></Row>
            <XicPanel>
              <Row $h={36}><Heading w={388} ml={1} base={34.7}>Extracted Ion Chromatogram (XIC)</Heading></Row>
              <XicChart />
            </XicPanel>
            <SpectrumPanel>
              <Row $h={7}><Heading w={199} ml={1} base={10.3}>MS/MS Spectrum</Heading></Row>
              <Spectrum />
            </SpectrumPanel>
            <Row $h={48}>
              <Action w={497} ml={3} tx={73} tw={328}>View Metabolomics USI</Action>
              <Action w={492} ml={18} tx={130} tw={237}>MASST Spectrum</Action>
            </Row>
            <Row $h={44}><HeadBox $w={1005} $ml={3}><Fit w={244} ml={16.5} size={36} base={29}>XIC Integration</Fit></HeadBox></Row>
            <Row $h={29}>
              <Tag $w={74} $ml={11}><Fit w={54} ml={6} size={18.8} base={16.7}>Export</Fit></Tag>
              <Rule />
            </Row>
            <DataGrid>
              {['variable', 'USI', 'GROUP', 'value'].map(h => (
                <Cell key={h} $head><Sorter /><Right>{h}</Right></Cell>
              ))}
              <Cell $head $tight><Hint>filter data...</Hint></Cell><Cell $head /><Cell $head /><Cell $head />
              {XIC_ROWS.map(([s, g, v]) => (
                <React.Fragment key={s}>
                  <Cell><Right>XIC 482.1</Right></Cell>
                  <Cell><Right>{USI(s)}</Right></Cell>
                  <Cell><Right>{g}</Right></Cell>
                  <Cell><Right>{v}</Right></Cell>
                </React.Fragment>
              ))}
            </DataGrid>
            <Row $h={40}><Heading w={241} ml={18} base={32}>Box Plots (Peak Area)</Heading></Row>
            <BoxPlot />
            <Row $h={42}><HeadBox $w={1006} $ml={5}><Fit w={224} ml={15.5} size={36} base={28.7}>File Summary</Fit></HeadBox></Row>
            <Summary>
              {SUMMARY.map((row, r) => row.map(([t, w], c) => (
                <SCell key={`${r}-${c}`} $odd={r === 1}>
                  <Fit w={w} ml={4} size={11.6} base={r ? 17.6 : 14.5} bold={!r} font={UI} color="#2f3338">{t}</Fit>
                </SCell>
              )))}
            </Summary>
          </Column>
        </Body>
        <Bubble x={957.5} y={16} wide lines={[{ x: 29.5, y: 57, w: 203, text: 'Selction of m/z' }, { x: 86.5, y: 96.5, w: 91, text: 'for XIC' }]} />
        <Bubble x={1340.5} y={536.5} wide lines={[{ x: 24.5, y: 57, w: 206, text: 'Cursor-Selction' }, { x: 62.5, y: 97, w: 138, text: 'of MS/MS' }]} />
        <Bubble x={469} y={885} wide={false} lines={[{ x: 74, y: 36.7, w: 98, text: 'Cursor-' }, { x: 26, y: 76.7, w: 195, text: 'Selction of XIC' }]} />
      </Frame>
    </>
  );
}
